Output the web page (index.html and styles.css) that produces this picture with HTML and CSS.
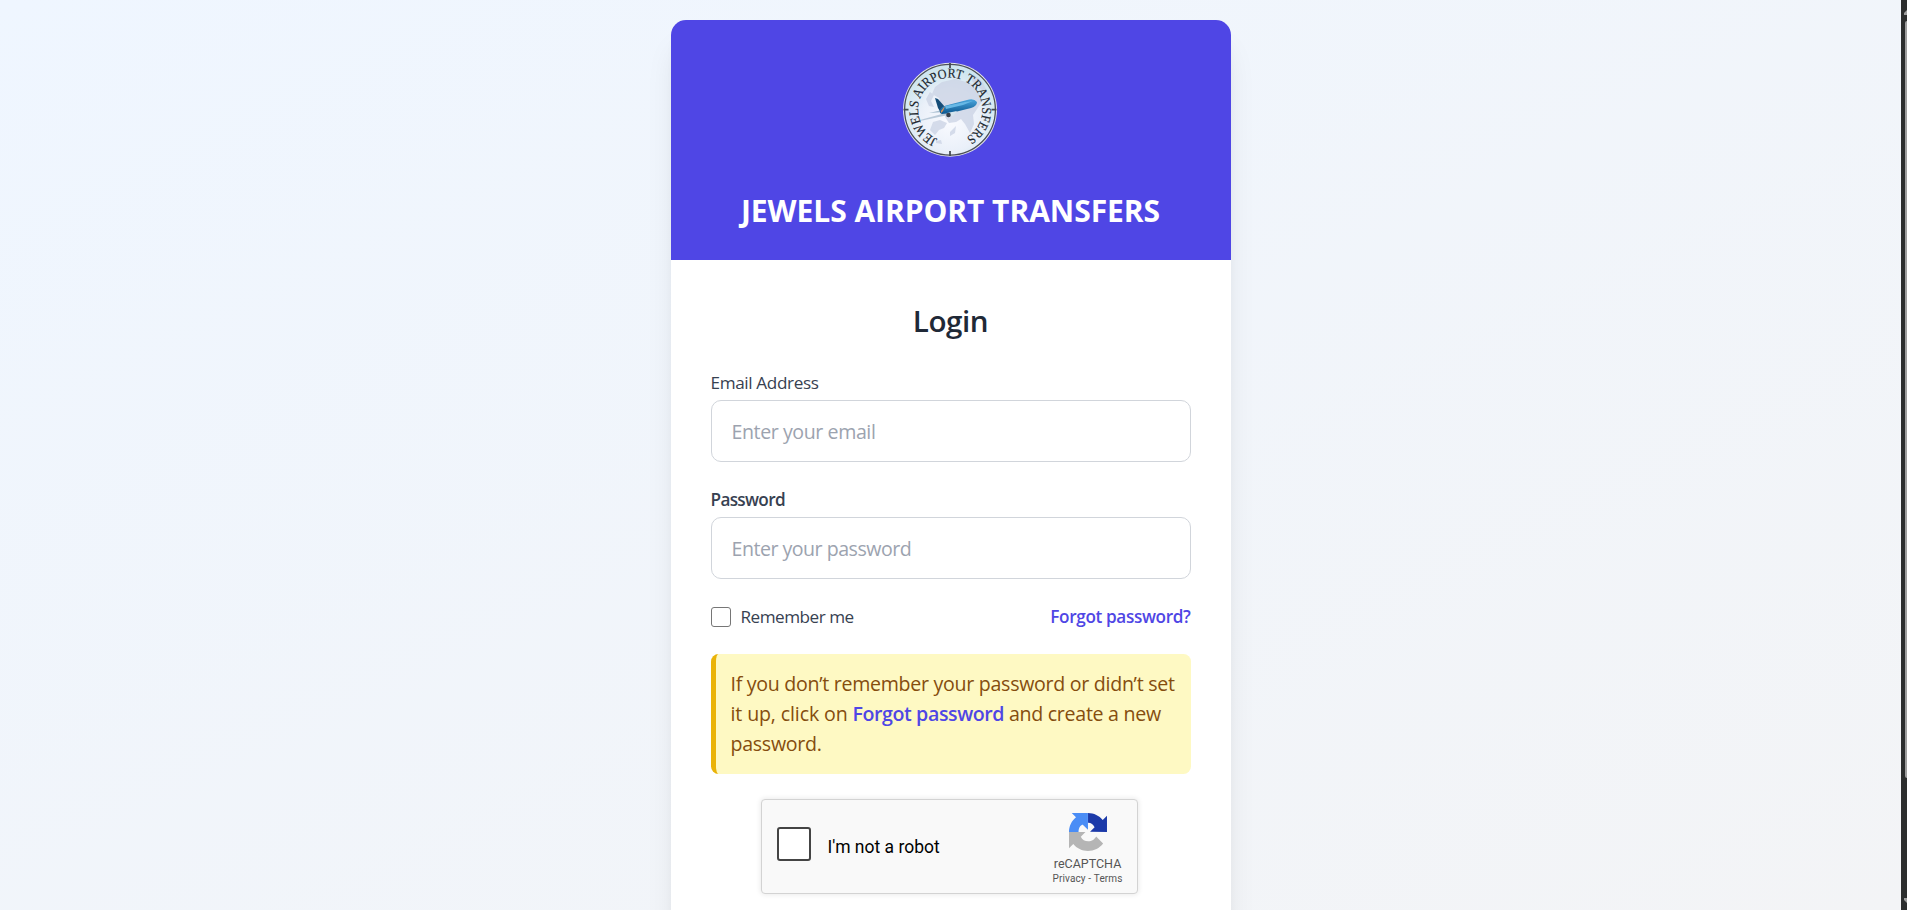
FILE: index.html
```
<!DOCTYPE html>
<html lang="en">
<head>
<meta charset="utf-8">
<title>Jewels Airport Transfers - Login</title>
<link rel="stylesheet" href="styles.css">
</head>
<body>
<div class="viewport">
  <main class="page">
    <section class="card">
      <header class="card-header">
        <svg class="logo" viewBox="0 0 120 120" role="img" aria-label="Jewels Airport Transfers">
          <defs>
            <radialGradient id="globe" cx="50%" cy="62%" r="56%">
              <stop offset="0" stop-color="#fafbff"/>
              <stop offset=".6" stop-color="#eaf0f9"/>
              <stop offset="1" stop-color="#cfe6ef"/>
            </radialGradient>
            <linearGradient id="plane" x1="0" y1="0" x2="0" y2="1">
              <stop offset="0" stop-color="#4aa6dd"/>
              <stop offset="1" stop-color="#0b568f"/>
            </linearGradient>
            <path id="ring" d="M46.500 89 A32 32 0 1 1 73.500 88.300"/>
          </defs>
          <circle cx="59" cy="59.7" r="47" fill="#e4e6ea"/>
          <circle cx="59" cy="59.7" r="45.400" fill="url(#globe)" stroke="#4c5058" stroke-width="1.300"/>
          <g fill="#cdd5e6" opacity=".8">
            <path d="M44 37l7-5 13-3 15 4 8 8 4 10-5 8-4 6 1 9-4 9-5-9-4-5-5 3-7 1-4-6 3-9-7-3-2-7-7-4z"/>
            <path d="M39 42l4 3-3 6 3 6-5-1-3-7zM42 72l7-2 7 3-3 5-5 2-4 5-5-5zM59 82l6-6-1 7-5 3zM45 91l5-1 1 4-6-1zM82 24l9 7 7 14-7-5-10-9z"/>
          </g>
          <path d="M59 13v5M59 106v-5M12.500 59.7h5M105.500 59.7h-5" stroke="#454a50" stroke-width="1.8"/>
          <g>
            <path d="M29 70l29-8 4 2-33 7z" fill="#b9c9d8"/>
            <path d="M38 63l13-3 3 2z" fill="#a9bfd0"/>
            <path d="M44 48l3 1 7 8-4 6-3-5z" fill="#164d78"/>
            <path d="M49 60q2-4 8-5l19-5q7-2 10 2 0 4-6 6l-20 5-9 1q-3-1-2-4z" fill="url(#plane)"/>
            <path d="M54 56l20-4 8-1-10 4-17 4z" fill="#67b8e5"/>
            <path d="M50 61l4-5-2 5-2 2z" fill="#e19355"/>
            <path d="M56 63l10-2-4 5-4-1z" fill="#d7e5ee"/>
            <circle cx="57.500" cy="65" r="2.300" fill="#38404b"/>
          </g>
          <text class="logo-text"><textPath href="#ring" textLength="171" lengthAdjust="spacingAndGlyphs">JEWELS AIRPORT TRANSFERS</textPath></text>
        </svg>
        <h1 class="brand">JEWELS AIRPORT TRANSFERS</h1>
      </header>
      <div class="card-body">
        <h2 class="heading">Login</h2>
        <form class="form">
          <div class="field">
            <label class="label" for="email">Email Address</label>
            <input class="input" id="email" type="email" placeholder="Enter your email">
          </div>
          <div class="field">
            <label class="label label-strong" for="password">Password</label>
            <input class="input input-password" id="password" type="password" placeholder="Enter your password">
          </div>
          <div class="options">
            <label class="remember"><input class="check" type="checkbox"><span>Remember me</span></label>
            <a class="forgot">Forgot password?</a>
          </div>
          <div class="notice">If you don’t remember your password or didn’t set <span class="notice-line">it up, click on</span> <a class="notice-link">Forgot password</a> and create a new password.</div>
          <div class="captcha">
            <span class="captcha-box"></span>
            <span class="captcha-label">I'm not a robot</span>
            <div class="captcha-brand">
              <svg class="captcha-icon" viewBox="0 0 64 64">
                <path fill="#1c3aa9" d="M64 31.955l-.033-1.370V4.687l-7.160 7.160C50.948 4.674 42.033.093 32.050.093v16.150h.130c4.980.137 9.040 2.800 10.940 7.700l-7.640 7.640z"/>
                <path fill="#4a8df6" d="M31.862.094l-1.370.033H4.594l7.160 7.160C4.580 13.147 0 22.060 0 32.046h16.050l.003-.13c.122-8.209 4.678-12.300 7.600-11.900l8.320 8.320z"/>
                <path fill="#b5b5b5" d="M.001 32.045l.033 1.370v25.898l7.160-7.160c5.860 7.173 14.774 11.754 24.760 11.754 10.400 0 19.620-4.960 25.470-12.640L45.690 39.410c-2.260 4.300-7.040 8.280-13.230 8.280-5.580 0-10.400-2.900-12.600-7.800l7.844-7.845z"/>
              </svg>
              <span class="captcha-name">reCAPTCHA</span>
              <span class="captcha-links">Privacy&nbsp;-&nbsp;Terms</span>
            </div>
          </div>
        </form>
      </div>
    </section>
  </main>
  <aside class="scrollbar">
    <svg class="scroll-arrow" viewBox="0 0 3 8"><path d="M3 1v5H0V4z"/></svg>
    <span class="thumb"></span>
    <svg class="scroll-arrow scroll-down" viewBox="0 0 3 8"><path d="M0 1h3v5L0 3z"/></svg>
  </aside>
</div>
</body>
</html>
```
FILE: styles.css
```
* { box-sizing: border-box; }
body {
  margin: 0;
  overflow: hidden;
  font-family: "Open Sans", "Noto Sans", sans-serif;
}
.viewport { display: flex; height: 910px; overflow: hidden; }
.page {
  flex: 1;
  display: flex;
  justify-content: center;
  align-items: flex-start;
  padding-top: 20px;
  background: linear-gradient(to bottom right, #eff6ff, #f3f4f6);
}
.card {
  width: 560px;
  height: 1100px;
  flex-shrink: 0;
  overflow: hidden;
  border-radius: 15px;
  background: #fff;
  box-shadow: 0 25px 31px -6px rgba(0, 0, 0, .1), 0 10px 12px -7px rgba(0, 0, 0, .1);
}
.card-header {
  display: flex;
  flex-direction: column;
  align-items: center;
  gap: 21px;
  height: 240px;
  padding: 30px 30px 0;
  background: #4f46e5;
}
.logo { flex-shrink: 0; width: 120px; height: 120px; }
.logo-text { font: 13.500px "Liberation Serif", serif; fill: #202830; stroke: #202830; stroke-width: .15px; }
.brand { margin: 0; font-size: 30px; line-height: 40px; font-weight: 700; letter-spacing: -.05px; color: #fff; white-space: nowrap; }
.card-body { padding: 41px 40px 40px; }
.heading {
  margin: 0 0 29px;
  font-size: 29.600px;
  line-height: 40px;
  font-weight: 600;
  letter-spacing: -.42px;
  text-align: center;
  color: #1f2937;
}
.form { display: flex; flex-direction: column; gap: 25px; }
.field { display: flex; flex-direction: column; gap: 5px; }
.label { font-size: 17.150px; line-height: 25px; letter-spacing: -.36px; color: #374151; }
.label-strong { font-weight: 600; letter-spacing: -.66px; }
.input {
  width: 100%;
  height: 62px;
  padding: 0 20px;
  border: 1px solid #d1d5db;
  border-radius: 10px;
  font: 19.600px "Open Sans", sans-serif;
  letter-spacing: -.42px;
  background: #fff;
}
.input-password { letter-spacing: -.5px; }
.input::placeholder { color: #9ca3af; opacity: 1; }
.options {
  display: flex;
  justify-content: space-between;
  align-items: center;
  height: 25px;
  font-size: 17.150px;
  line-height: 25px;
}
.remember { display: flex; align-items: center; gap: 10px; letter-spacing: -.5px; color: #374151; }
.check {
  appearance: none;
  width: 20px;
  height: 20px;
  margin: 0;
  border: 1px solid #767676;
  border-radius: 3px;
  background: #fff;
}
.forgot { font-weight: 600; letter-spacing: -.35px; color: #4f46e5; }
.notice {
  height: 120px;
  padding: 15px 6px 15px 15px;
  border-left: 5px solid #eab308;
  border-radius: 7.500px;
  background: #fef9c3;
  font-size: 19.600px;
  line-height: 30px;
  letter-spacing: -.29px;
  color: #854d0e;
}
.notice-line { letter-spacing: -.13px; }
.notice-link { font-weight: 600; letter-spacing: -.4px; color: #4f46e5; }
.captcha {
  display: flex;
  align-items: center;
  width: 377px;
  height: 95px;
  margin-left: 50px;
  padding: 0 14px 0 15px;
  border: 1px solid #d3d3d3;
  border-radius: 4px;
  background: #f9f9f9;
  box-shadow: 0 0 5px 1px rgba(0, 0, 0, .08);
  font-family: Roboto, sans-serif;
}
.captcha-box { width: 34px; height: 34px; margin-bottom: 5px; border: 2px solid #444; border-radius: 3px; background: #fff; }
.captcha-label { margin-left: 17px; font-size: 17.500px; color: #000; }
.captcha-brand { display: flex; flex-direction: column; align-items: center; margin-left: auto; color: #555; white-space: nowrap; }
.captcha-icon { width: 38px; height: 38px; margin-top: 6px; }
.captcha-name { margin-top: 5px; font-size: 12.500px; line-height: 16px; }
.captcha-links { font-size: 10px; line-height: 14px; letter-spacing: .12px; }
.scrollbar {
  display: flex;
  flex-direction: column;
  align-items: flex-end;
  justify-content: space-between;
  width: 6px;
  padding: 9px 0 5px;
  background: #2c2e2e;
}
.scroll-arrow { width: 3px; height: 8px; fill: #a0a0a0; }
.thumb { width: 2px; height: 757px; margin-bottom: 116px; border-radius: 2px 0 0 2px; background: #9f9f9f; }
```
